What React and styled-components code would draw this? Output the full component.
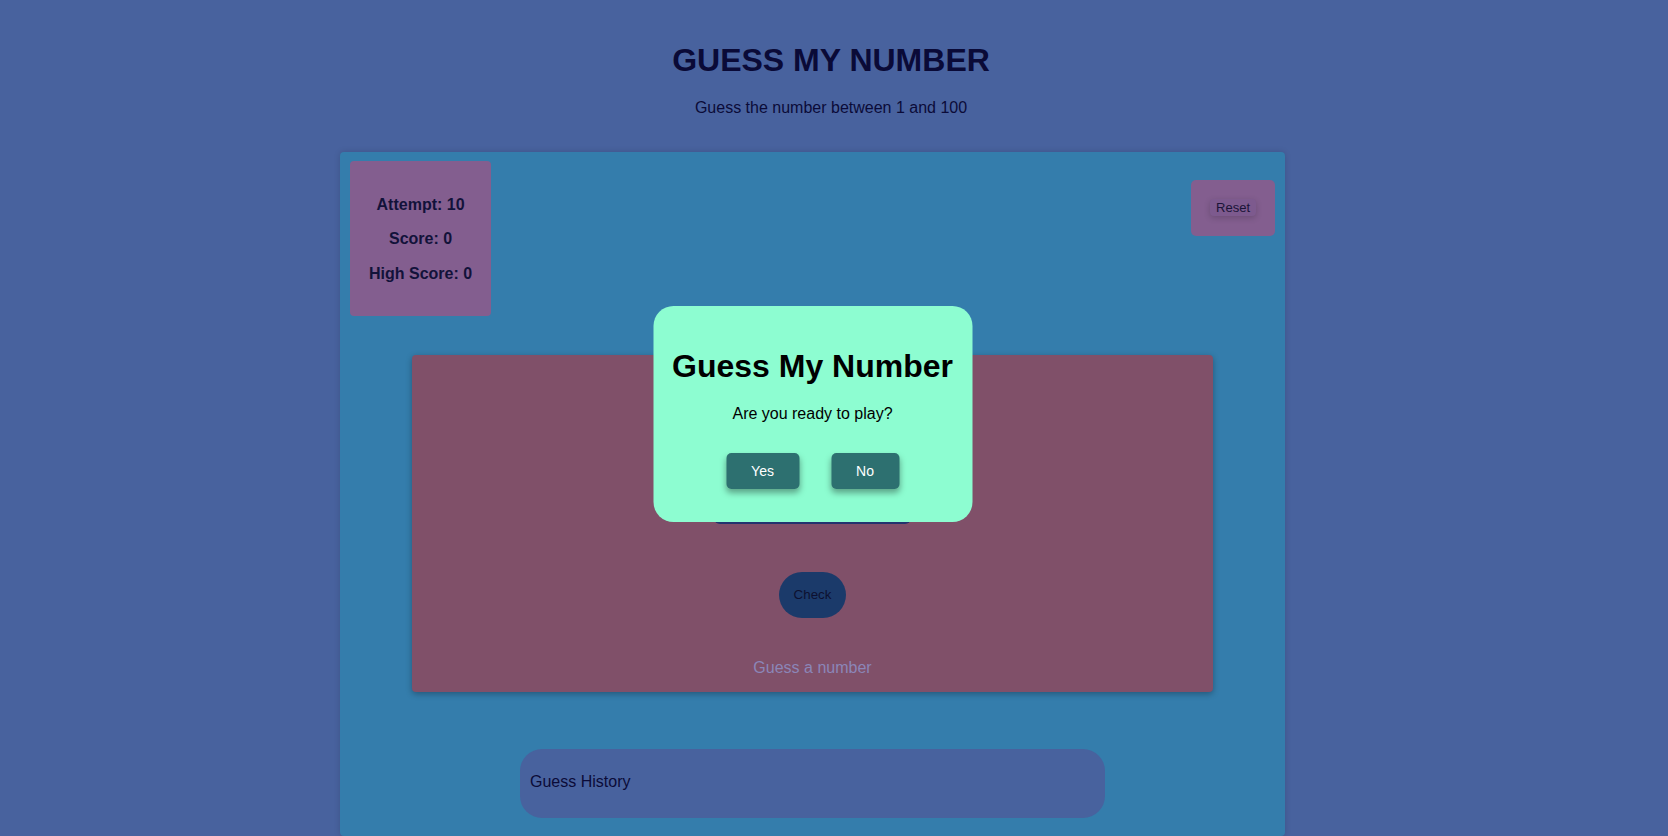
import React from "react";
import styled, { createGlobalStyle } from "styled-components";

const Global = createGlobalStyle`
  html, body { margin: 0; padding: 0; overflow: hidden; }
  body {
    background: #48629e;
    font-family: "Liberation Sans", Arial, Helvetica, sans-serif;
    color: #0b0b38;
  }
`;

const Page = styled.div`
  min-height: 836px;
  padding-top: 42px;
  box-sizing: border-box;
`;

const Header = styled.header`
  text-align: center;
  padding-right: 6px;
`;

const Title = styled.h1`
  margin: 0;
  font-size: 32px;
  line-height: 37px;
  font-weight: 700;
  color: #0a0a37;
`;

const Subtitle = styled.p`
  margin: 20px 0 0;
  font-size: 16px;
  line-height: 18px;
  color: #0b0b38;
`;

const Board = styled.main`
  position: relative;
  margin: 35px 0 0 340px;
  width: 945px;
  background: #347dac;
  border-radius: 4px;
  box-shadow: 0 0 6px rgba(0, 0, 0, 0.15);
  padding: 9px 10px 18px;
  box-sizing: border-box;
`;

const TopRow = styled.div`
  display: flex;
  justify-content: space-between;
  align-items: flex-start;
`;

const StatsCard = styled.div`
  background: #835e8f;
  border-radius: 4px;
  padding: 19px 19px 17px;
  text-align: center;
`;

const Stat = styled.p`
  margin: 16px 0;
  font-size: 16px;
  line-height: 18.4px;
  font-weight: 700;
  color: #12123a;
`;

const ResetCard = styled.div`
  margin-top: 19px;
  background: #835e8f;
  border-radius: 5px;
  padding: 19px 19px 20px;
  display: flex;
`;

const ResetButton = styled.button`
  font-family: inherit;
  font-size: 13px;
  line-height: 15px;
  padding: 1px 6px;
  border: none;
  border-radius: 4px;
  background: #7d5a8e;
  color: #1a1438;
  box-shadow: 0 2px 6px rgba(0, 0, 0, 0.18);
  cursor: pointer;
`;

const GamePanel = styled.section`
  margin: 39px auto 0;
  width: 801px;
  height: 337px;
  box-sizing: border-box;
  background: #805069;
  border-radius: 4px;
  box-shadow: 0 2px 6px rgba(0, 0, 0, 0.3);
  display: flex;
  flex-direction: column;
  align-items: center;
  padding-top: 129px;
`;

const GuessInput = styled.input`
  width: 197px;
  height: 40px;
  box-sizing: border-box;
  border: none;
  border-radius: 6px;
  background: #23336e;
  color: #fff;
  font-family: inherit;
  font-size: 16px;
  text-align: center;
`;

const CheckButton = styled.button`
  margin-top: 48px;
  font-family: inherit;
  font-size: 13.33px;
  line-height: 16px;
  padding: 15px 15px;
  border: none;
  border-radius: 23px;
  background: #1b3a6a;
  color: #0d1030;
  cursor: pointer;
`;

const Hint = styled.p`
  margin: 41px 0 0;
  font-size: 16px;
  line-height: 18px;
  color: #8b86b8;
`;

const History = styled.section`
  margin: 57px auto 0;
  width: 585px;
  height: 69px;
  box-sizing: border-box;
  background: #48629e;
  border-radius: 22px;
  padding: 0 10px 4px;
  display: flex;
  align-items: center;
  font-size: 16px;
  color: #0b0b38;
`;

const Modal = styled.div`
  position: absolute;
  top: 154px;
  left: 50%;
  transform: translateX(-50%);
  width: 319px;
  box-sizing: border-box;
  background: #8dfdd1;
  border-radius: 20px;
  padding: 42px 10px 33px;
  text-align: center;
  color: #000;
`;

const ModalTitle = styled.h2`
  margin: 0;
  font-size: 32px;
  line-height: 37px;
  font-weight: 700;
  color: #000;
`;

const ModalText = styled.p`
  margin: 20px 0 0;
  font-size: 16px;
  line-height: 18px;
`;

const ModalActions = styled.div`
  margin-top: 30px;
  display: flex;
  justify-content: center;
  gap: 32px;
`;

const ModalButton = styled.button`
  width: ${(p) => p.$w}px;
  height: 36px;
  border: none;
  border-radius: 5px;
  background: #2d7070;
  color: #fff;
  font-family: inherit;
  font-size: 14px;
  box-shadow: 0 4px 6px rgba(0, 0, 0, 0.35);
  cursor: pointer;
`;

export default function App() {
  return (
    <Page>
      <Global />
      <Header>
        <Title>GUESS MY NUMBER</Title>
        <Subtitle>Guess the number between 1 and 100</Subtitle>
      </Header>
      <Board>
        <TopRow>
          <StatsCard>
            <Stat>Attempt: 10</Stat>
            <Stat>Score: 0</Stat>
            <Stat>High Score: 0</Stat>
          </StatsCard>
          <ResetCard>
            <ResetButton>Reset</ResetButton>
          </ResetCard>
        </TopRow>
        <GamePanel>
          <GuessInput type="number" />
          <CheckButton>Check</CheckButton>
          <Hint>Guess a number</Hint>
        </GamePanel>
        <History>Guess History</History>
        <Modal>
          <ModalTitle>Guess My Number</ModalTitle>
          <ModalText>Are you ready to play?</ModalText>
          <ModalActions>
            <ModalButton $w={73}>Yes</ModalButton>
            <ModalButton $w={68}>No</ModalButton>
          </ModalActions>
        </Modal>
      </Board>
    </Page>
  );
}
